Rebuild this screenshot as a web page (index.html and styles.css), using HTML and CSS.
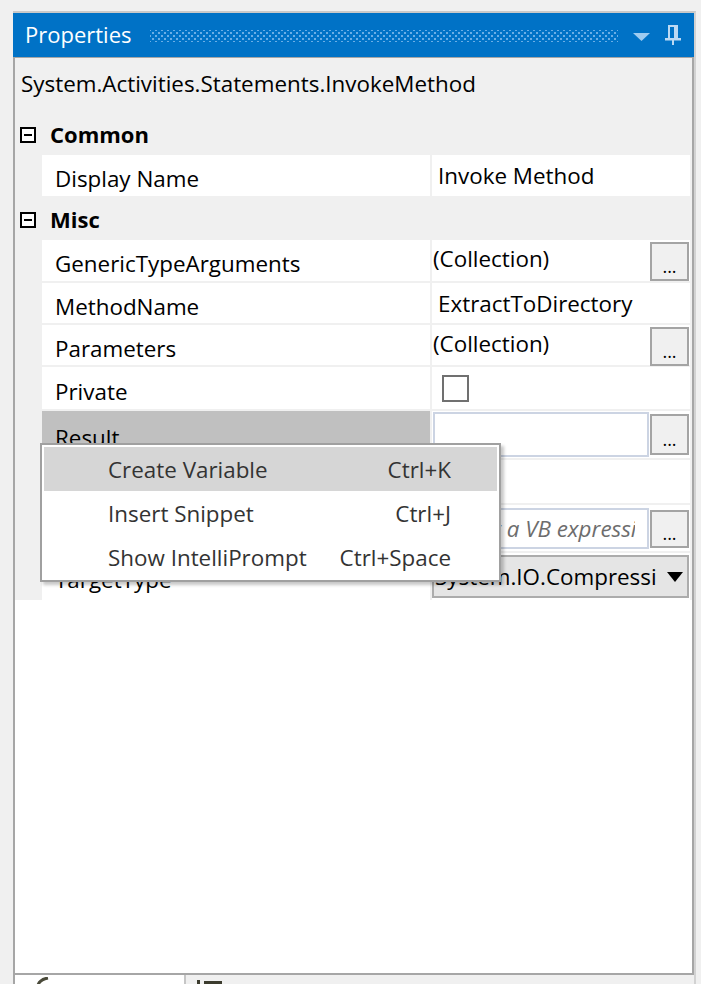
FILE: index.html
```html
<!DOCTYPE html>
<html>
<head>
<meta charset="utf-8">
<link rel="stylesheet" href="styles.css">
</head>
<body>
<div class="panel">
  <div class="titlebar">
    <span class="title">Properties</span>
    <div class="grip"></div>
    <svg class="dd" viewBox="0 0 17 8"><polygon points="0,0 17,0 8.5,8" fill="#9ecbf0"/></svg>
    <svg class="pin" viewBox="0 0 16 20"><path fill-rule="evenodd" fill="#bcd9f3" d="M3 0H13V13H16V15.5H9V20H7V15.5H0V13H3Z M5 2V13H9V2Z"/></svg>
  </div>
  <div class="content">
    <div class="typename">System.Activities.Statements.InvokeMethod</div>
    <div class="grid">
      <div class="cat"><span class="toggle"></span>Common</div>
      <div class="row h41"><div class="name">Display Name</div><div class="val"><span class="txt">Invoke Method</span></div></div>
      <div class="cat cat2"><span class="toggle"></span>Misc</div>
      <div class="row h41"><div class="name">GenericTypeArguments</div><div class="val"><span class="coll">(Collection)</span><span class="btn">...</span></div></div>
      <div class="row"><div class="name">MethodName</div><div class="val"><span class="txt">ExtractToDirectory</span></div></div>
      <div class="row"><div class="name">Parameters</div><div class="val"><span class="coll">(Collection)</span><span class="btn">...</span></div></div>
      <div class="row h42"><div class="name">Private</div><div class="val"><span class="chk"></span></div></div>
      <div class="row h47"><div class="name sel">Result</div><div class="val"><span class="tb tb-result"></span><span class="btn btn-result">...</span></div></div>
      <div class="row h43"><div class="name">TargetObject</div><div class="val"></div></div>
      <div class="row h46"><div class="name">TargetObject</div><div class="val"><span class="tb tb-vb"><span class="ph">Enter a VB expression</span></span><span class="btn btn-vb">...</span></div></div>
      <div class="row h47 last"><div class="name">TargetType</div><div class="val"><div class="combo"><span class="combo-text">System.IO.Compression.ZipFile</span><svg class="combo-arrow" viewBox="0 0 16 10"><polygon points="0,0 16,0 8,10" fill="#000"/></svg></div></div></div>
    </div>
    <div class="menu">
      <div class="mi hl"><span>Create Variable</span><span>Ctrl+K</span></div>
      <div class="mi"><span>Insert Snippet</span><span>Ctrl+J</span></div>
      <div class="mi"><span>Show IntelliPrompt</span><span>Ctrl+Space</span></div>
    </div>
  </div>
  <div class="tabs">
    <div class="tab tab1"><svg class="tabicon1" viewBox="0 0 14 8"><path d="M2 8 C3 5 6 2 12 1" stroke="#4a4a3a" stroke-width="3" fill="none"/></svg></div>
    <div class="tab tab2"><svg class="tabicon2" viewBox="0 0 26 6"><rect x="0" y="0" width="3" height="6" fill="#3c3c2e"/><rect x="7" y="1" width="18" height="5" fill="#3c3c2e"/></svg></div>
  </div>
</div>
</body>
</html>
```
FILE: styles.css
```css
* { box-sizing: border-box; }
html, body { margin: 0; padding: 0; }
body {
  background: #f0f0f0;
  font-family: "Open Sans", "Noto Sans", sans-serif;
  font-size: 22.4px;
  color: #000;
  width: 701px;
  height: 984px;
  overflow: hidden;
}
.panel {
  margin: 11px 0 0 13px;
  width: 683px;
  border-top: 2px solid #c9c9c9;
  border-right: 2px solid #d2d2d2;
}
.titlebar {
  height: 44px;
  background: #0072c6;
  display: flex;
  align-items: center;
  color: #fff;
}
.title { padding-left: 12px; line-height: 1; margin-top: -2px; font-size: 22px; }
.grip {
  flex: 1;
  height: 12px;
  margin: 2px 15px 0 18px;
  background-image:
    radial-gradient(circle at center, #6aaee6 0.9px, transparent 1.3px),
    radial-gradient(circle at center, #6aaee6 0.9px, transparent 1.3px);
  background-size: 6px 6px;
  background-position: 0 0, 3px 3px;
}
.dd { width: 17px; height: 8px; margin: 4px 15px 0 0; }
.pin { width: 16px; height: 20px; margin: -1px 13px 0 0; }
.content {
  position: relative;
  height: 918px;
  background: #fff;
  border: 2px solid #a6a6a6;
  border-top: 1px solid #a6a6a6;
}
.typename {
  height: 55px;
  background: #f0f0f0;
  padding-left: 6px;
  line-height: 52px;
  white-space: nowrap;
}
.grid { background: #f0f0f0; display: flex; flex-direction: column; }
.cat {
  height: 42px;
  display: flex;
  align-items: center;
  font-weight: 700;
  padding-left: 5px;
  font-size: 22px;
}
.toggle {
  width: 16px;
  height: 16px;
  border: 2px solid #000;
  margin: 2px 14px 0 0;
  display: flex;
  align-items: center;
  justify-content: center;
  background: #fff;
}
.toggle::after { content: ""; width: 8px; height: 2px; background: #000; }
.row { display: flex; margin: 0 2px 2px 27px; height: 40px; }
.row.h41 { height: 41px; }
.row.h42 { height: 42px; }
.row.h43 { height: 43px; }
.row.h46 { height: 46px; }
.row.h47 { height: 47px; }
.row.last { margin-bottom: 0; }
.name {
  width: 388px;
  flex: none;
  background: #fff;
  padding: 6px 0 0 13px;
  display: flex;
  align-items: center;
  margin-right: 2px;
  white-space: nowrap;
  overflow: hidden;
}
.name.sel { background: #c0c0c0; }
.val { flex: 1; background: #fff; display: flex; align-items: center; min-width: 0; }
.txt { padding-left: 6px; white-space: nowrap; }
.coll { padding-left: 1px; flex: 1; margin-top: -4px; white-space: nowrap; }
.btn {
  width: 39px;
  height: 39px;
  margin: 2px 1px 0 auto;
  align-self: flex-start;
  background: #f0f0f0;
  border: 2px solid #a4a4a4;
  font-size: 18px;
  display: flex;
  justify-content: center;
  align-items: center;
  padding-top: 8px;
  flex: none;
}
.btn-result { height: 41px; margin-top: 3px; }
.btn-vb { height: 38px; margin-top: 5px; }
.chk { width: 27px; height: 27px; border: 2px solid #707070; margin-left: 10px; background: #fff; }
.tb {
  width: 216px;
  margin-left: 1px;
  border: 2px solid #ccd4e3;
  align-self: flex-start;
  background: #fff;
  overflow: hidden;
  display: flex;
  align-items: center;
  flex: none;
}
.tb-result { height: 45px; margin-top: 1px; }
.tb-vb { height: 41px; margin-top: 3px; }
.ph {
  display: block;
  width: 200px;
  overflow: hidden;
  font-style: italic;
  color: #6d6d6d;
  padding-left: 14px;
  white-space: nowrap;
}
.combo {
  flex: 1;
  align-self: stretch;
  margin: 2px 1px 2px 0;
  background: #e5e5e5;
  border: 2px solid #acacac;
  display: flex;
  align-items: center;
  padding-left: 1px;
  min-width: 0;
}
.combo-text { flex: 1; overflow: hidden; white-space: nowrap; }
.combo-arrow { width: 16px; height: 10px; margin: 0 4px 0 10px; flex: none; }
.menu {
  position: absolute;
  left: 25px;
  top: 385px;
  width: 461px;
  border: 2px solid #a0a0a0;
  background: #fff;
  padding: 2px 2px 1px;
  box-shadow: 3px 3px 3px rgba(0, 0, 0, 0.22);
  color: #333;
}
.mi {
  height: 44px;
  display: flex;
  align-items: center;
  justify-content: space-between;
  padding: 0 46px 0 64px;
  white-space: nowrap;
}
.mi.hl { background: #d6d6d6; }
.tabs { display: flex; height: 20px; }
.tab1 {
  width: 173px;
  background: #fff;
  border-left: 2px solid #a6a6a6;
  border-right: 2px solid #c6c6c6;
  padding: 2px 0 0 21px;
}
.tab2 { flex: 1; background: #f0f0f0; padding: 5px 0 0 11px; }
.tabicon1 { width: 14px; height: 8px; display: block; }
.tabicon2 { width: 26px; height: 6px; display: block; }
```
